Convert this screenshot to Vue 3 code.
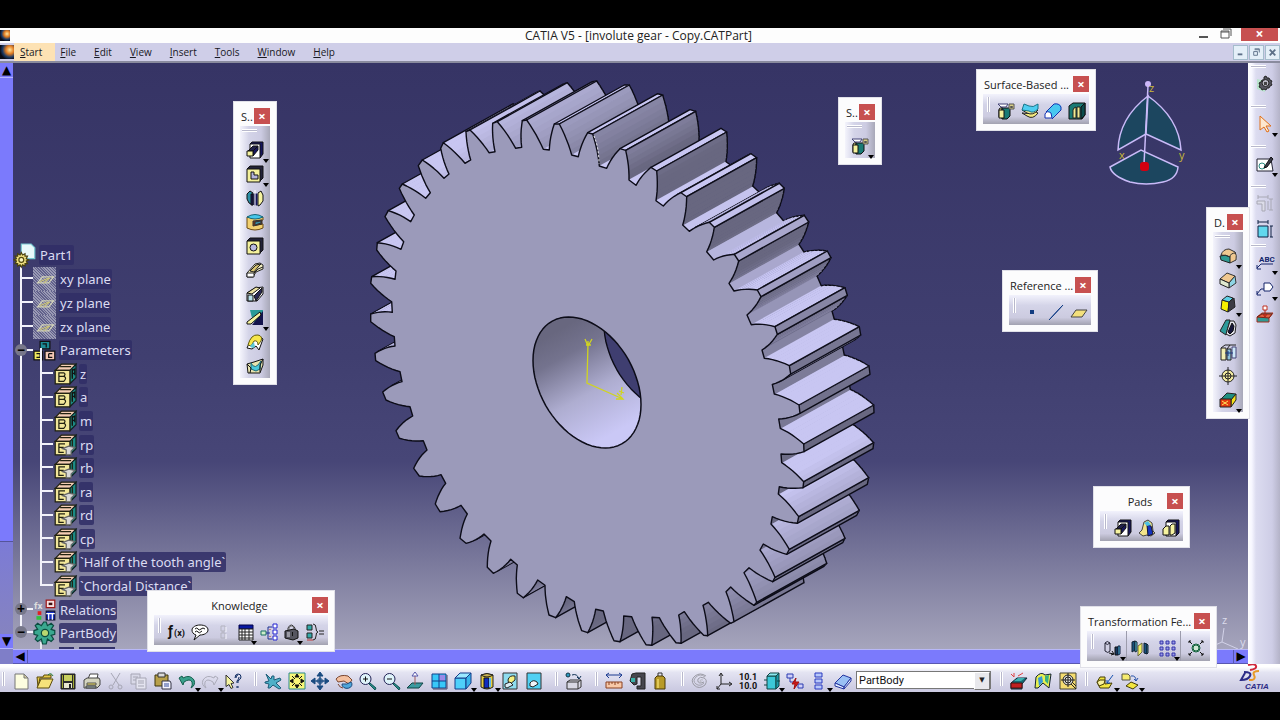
<script setup>
import { h } from 'vue'

/* ---------- icons: "fill|stroke|path" or "T|fill|x|y|size|text", on an 18 x 18 grid ---------- */
const art = {
  pad: ['#16165e|#111|M4 3l2-2h11v12l-3 4', '#fff|#111|M4 3h10v14H4z', '#20204a|#111|M2 10l5-5h5l-5 5z', '#16165e|#111|M7 10l5-5v4l-5 6z', '#f6f3a0|#111|M1 10h6v5H1z'],
  pocket: ['#222238|#111|M1 4l3-3h13v12l-3 3', '#f4f19c|#111|M1 4h13v13H1z', '#b4b4dc|#111|M5 7h3v3h4v4H5z'],
  shaft: ['#2b8fa6|#111|M1 5l3-3 3 2v12l-4-2-2-4z', '#16165e|#16165e|M8 5h3v11H8z', '#f6f3a0|#111|M12 4l3-2 2 4v6l-3 4-2 1z', 'none|#fff|M9 1v16', '#16165e|#111|M5 5h2v11H5z'],
  groove: ['#f2d070|#6b4a10|M1 4v11q8 4 16 0v-4l-7 1V8l7-1V4z', '#45c6ea|#15667a|M1 4q8-5 16 0q-8 4-16 0z', '#7a3a1c|#333|M7 8l9-1v4l-9 2z', '#3a8fa8|#333|M9 9l6-1v2l-6 2z'],
  hole: ['#222238|#111|M1 4l3-3h13v12l-3 3', '#f4f19c|#111|M1 4h13v13H1z', '#b9b9e0|#111|M4 10.500a3.500 3.500 0 1 0 7 0a3.500 3.500 0 1 0-7 0z'],
  rib: ['#f2eec0|#222|M1 12l8-9 5-1 3 2v4l-7 3-3 5H1z', '#fff|#222|M1 12h7v4H1z', '#d8c470|#222|M4 10l6-6 5-1-3 3-4 5z', 'none|#222|M8 12l4-4 5-2'],
  slot: ['#fff|#111|M1 8l8-5 8-1v7l-6 7H1z', '#e9dfa0|#111|M1 8l9-6 4 1-8 6z', '#2a2a55|#111|M8 11l8-8v4l-6 9z', '#b8e0ea|#111|M2 10h5v6H2z'],
  stiffener: ['#2a9a98|none|M4 1h13v12H7z', '#14144c|none|M17 2v14H6z', '#f6f3a0|#111|M1 13L14 3l1 3L5 15H1z'],
  loft: ['#fff|#111|M1 15l4-9 4-3h4l4 3-4 11-3-4-4 3z', '#f6e64a|#665e10|M2 12q3-11 10-10q5 1 3 6l-3 4q0-5-4-4l-3 5z', '#5bc7d6|none|M4 13l4-4 1 5-3 1z'],
  unloft: ['#e8e4b0|#111|M1 7l7-2 9-3v6l-3 8H2z', '#49c7dc|#1a6a77|M5 6q4 8 10-2l-1 8-4 2-5-2z', 'none|#111|M1 7l4 4-1 5M17 2l-3 6v7'],
  draftcyl: ['#f0ec90|#111|M2 7l3-2v11l-3-1z', '#1a7a75|#111|M5 6h8v8l-3 3H5z', '#f4f19c|#111|M2 8h5v8H2z', '#fff|#447|M1 2h10l-2 3H4z', '#d9cf88|#555|M12 2h5v5h-5z', 'none|#555|M13.500 4.500h2v1h-2z'],
  thicksurf: ['#f4ea80|#222|M1 11l5 3q6 4 11-3l-4-2q-5 4-12 2z', '#f2e690|#222|M1 8l5 3q6 3 11-3l-4-2z', '#4fcdf0|#16768a|M3 2l5 2q4 2 9-2v5q-5 5-9 2L1 8z'],
  closesurf: ['#48c8f0|none|M1 12L9 3q5-3 8 1v4l-9 8z', '#fff|#1030b0|M1 12q2-4 6-1l1 5H1z', 'none|#1030b0|M2 10L10 2q5-1 7 3v3l-9 9'],
  sew: ['#1a7a75|#111|M1 4l4-3h12v12l-3 4H1z', '#0b4c4c|#111|M13 5l4-4v12l-4 4z', '#f2eb90|#222|M6 6l2-1v11H5V8zM9 5h3v11H9z'],
  fillet: ['#f0c890|#333|M2 8q2-6 8-6l6 3q2 3 1 8l-6 3z', '#2f9a92|#222|M1 9q6-2 10 1v6l-9-3z', 'none|#333|M2 8q6 0 9 2q0-4 6-4'],
  chamfer: ['#f0c890|#333|M1 8l7-6 8 3-6 7z', '#8ed4e4|#333|M10 12l6-7 1 7-7 5z', '#dfe9d0|#222|M1 8l9 4v5l-9-4z'],
  draft: ['#f5f000|#222|M3 5l7 2-1 10-7-3z', '#5ed0e6|#222|M3 5l5-4 6 2-4 4z', '#3c3c44|#222|M10 7l5-4 1 9-7 5z'],
  shell: ['#2d9a9a|#222|M1 12L7 1h4L7 16z', '#e4e4ec|#222|M7 15l4-13h4l2 4-1 8-5 3z', '#16163c|#111|M9 13l4-9 2 3-1 5-3 3z'],
  thickness: ['#f3eeb4|#222|M2 5h5v12H2z', '#8ec0dc|#222|M8 6h4v11H8z', '#cde8f8|#447|M13 4h4v11h-4z', 'none|#222|M2 5l4-3h5L8 6M11 2h6', 'none|#1a3a80|M6 10h8M9 8v5'],
  target: ['#f4ecA0|#222|M3 9a6 6 0 1 0 12 0a6 6 0 1 0-12 0z', 'none|#222|M6 9a3 3 0 1 0 6 0a3 3 0 1 0-6 0M9 0v18M0 9h18'],
  replace: ['#1f8f80|#222|M2 8l6-6 9 1-5 6z', '#f4e11a|#222|M12 9l5-6v6l-5 7z', '#e33a10|#222|M1 8h11v8H1z', 'none|#ffe45a|M3 10l6 4M9 10l-6 4'],
  point: ['#123c80|none|M7 7h4v4H7z'],
  line: ['none|#0d3a84|M2 17L16 2', 'none|#0d3a84|M3 16L15 3'],
  plane: ['#f3e07c|#444|M1 14l5-7h11l-5 7z'],
  prism: ['#f3e48a|#444|M1 14l3-3 2-8 4-2 4 3 1 8 2 2-4 3-4-1-4 1z', '#1433c0|#113|M9 6l4 1 2 8-5 2z', '#4cc0e4|none|M6 4l4-2 3 4-4 1z'],
  multipad: ['#16165e|#111|M4 3l2-2h11v13l-3 3', '#fff|#111|M4 3h10v14H4z', '#f6f3a0|#111|M1 10l3-3h3v9H1zM8 7l2-2h3v9l-3 2H8z'],
  formula: ['T|#111|0|13|14|ƒ', 'T|#111|6|13|9|(x)'],
  comment: ['#fff|#111|M9 2c5 0 8 2 8 5s-4 5-8 5l-6 5 2-5C2 11 1 9 1 7c0-3 4-5 8-5z', 'none|#111|M4 6q2-2 3 0t3 0t4 0M4 9q2-2 3 0t4-1'],
  lockoff: ['none|#b3b3bf|M7 3h4v5H7zM7 10h4v5H7zM9 8v2', 'none|#f6f6ff|M12 4v5M12 11v5'],
  table: ['#0818a0|#000048|M2 2h14v4H2z', '#fff|#222|M2 6h14v11H2z', 'none|#222|M2 9h14M2 12h14M2 15h14M5 6v11M8 6v11M12 6v11'],
  graph: ['#cdeec8|#1b6f64|M1 8h5v4H1z', 'none|#1c2f90|M6 10h4M8 10V4h4M8 10v6h4', '#fff|#2222d0|M13 1h4v4h-4zM13 7h4v4h-4zM13 13h4v4h-4z', 'none|#c02020|M10 6v1M10 13v1'],
  lock: ['none|#333|M5 8V5q3-6 7 0v3', 'none|#777|M6 8V5q2-4 5 0v3', '#555560|#111|M2 8l9-2 4 2v7l-5 2-8-2z', '#9a9aa4|none|M4 9h3v5H4z', '#111|none|M9 9h1v4H9z'],
  equiv: ['#3aa|#222|M1 2h5v5H1zM1 10h5v5H1z', 'none|#222|M7 1q3 0 3 4t2 4q-2 0-2 4t-3 4M13 8h5M13 11h5', 'none|#b33|M1 17h6'],
  translate: ['none|#223|M2 4q2-3 5 0v8q-2 3-5 0zM2 4q2 3 5 0', '#16365e|#111|M12 8h3v8h-3z', '#4db6d8|#124|M15 7h2v8l-2 1z', 'none|#111|M6 14l5 1M9 12l2 3-3 1'],
  mirror: ['#17507c|#123|M1 3l3-1v9l-3 2z', '#5cc6dc|#123|M4 2l2 1v9l-2 1z', '#f0f060|#664|M7 7l4-3v9l-4 4z', '#17507c|#123|M13 4l3 1v10l-3-1z', '#5cc6dc|#123|M16 5l1 1v8l-1 1z'],
  pattern: ['#9a9ae8|#3434a8|M2 2h3v3H2zM8 2h3v3H8zM14 2h3v3h-3zM2 8h3v3H2zM8 8h3v3H8zM14 8h3v3h-3zM2 14h3v3H2zM8 14h3v3H8zM14 14h3v3h-3z'],
  scale: ['#cfe8d4|#12603c|M5 9a4 4 0 1 0 8 0a4 4 0 1 0-8 0z', 'none|#12603c|M6 9a3 3 0 1 0 6 0a3 3 0 1 0-6 0', 'none|#111|M2 2l3 3M16 2l-3 3M2 16l3-3M16 16l-3-3M2 4V2h2M14 2h2v2M2 14v2h2M16 14v2h-2'],
  newdoc: ['#fdfde0|#777|M3 2h9l4 4v11H3z', '#d8d0a0|#777|M12 2v4h4z'],
  open: ['#e6c94a|#5b4a0a|M1 5h6l1-2h7v3H4L2 15z', '#f7e27a|#5b4a0a|M1 16L5 7h12l-4 9z', 'none|#1f7a30|M12 3q3-3 5 1'],
  save: ['#2c2c2c|#222|M2 2h14v15H2z', '#c8d060|none|M5 3h8v6H5z', '#e9e9d0|none|M5 11h8v5H5z', '#222|none|M10 12h2v4h-2z', '#a0a830|none|M3 3h1v13H3zM14 3h1v13h-1z'],
  print: ['#fff|#444|M5 7l2-5h8l-1 5z', '#d4d4c0|#444|M1 8l3-2h12l1 2v5l-3 3H1z', '#f0e060|#555|M4 11h9v2H4z', '#9aa|#444|M3 14h10v2H3z'],
  cut: ['none|#a6a6b4|M4 1l8 12M13 1L6 13', 'none|#a6a6b4|M2 15a2 2 0 1 0 4 0a2 2 0 1 0-4 0zM11 15a2 2 0 1 0 4 0a2 2 0 1 0-4 0z'],
  copy: ['#d9d9e8|#a6a6b4|M1 2h9v10H1z', '#e4e4f0|#a6a6b4|M6 6h10v11H6z', 'none|#a6a6b4|M3 5h5M3 8h3M8 9h6M8 11h6M8 14h6'],
  paste: ['#b8a04a|#3c340e|M1 3h13v11H1z', '#d9d9d9|#333|M4 1h7v4H4z', '#f4f4ff|#334|M8 9h8l1 2v6H8z', 'none|#334a9a|M10 12h5M10 14h5'],
  undo: ['#3aa08c|#15604e|M1 6l4 7 1-3q6-4 8 0q1 3-1 6q5-3 3-8q-4-6-11-2L4 4z'],
  redo: ['none|#acacba|M17 6l-4 7-1-3q-6-4-8 0q-1 3 1 6q-5-3-3-8q4-6 11-2l1-2z'],
  help: ['#f5f4a0|#333|M1 3l8 8-3 .5 2 4-2 1-2-4-3 2z', 'none|#0d2a60|M10 6q0-4 3-4t3 3q0 2-3 4v2M13 14v2', 'none|#0d2a60|M11 6q0-3 2-3M14 5q0 2-2 4v2M12 14v2'],
  fly: ['#4fb0c8|#1d5c78|M2 2l5 5 1-3 2 0 0 4 6-2 1 2-5 3 5 5-2 1-6-4-3 3-2 0 1-4-4-1 0-1 4-1z'],
  fit: ['#f8f678|#2b8a8a|M1 1h16v16H1z', '#111|#111|M9 2l2 3H7zM9 16l2-3H7zM2 9l3-2v4zM16 9l-3-2v4z', 'none|#111|M4 4l3 3M14 4l-3 3M4 14l3-3M14 14l-3-3'],
  pan: ['#194a80|#194a80|M9 0l3 4H6zM9 18l3-4H6zM0 9l4-3v6zM18 9l-4-3v6z', 'none|#194a80|M9 3v12M3 9h12M8 6h2v6H8zM6 8h6v2H6z'],
  rotate: ['#f4c0a0|#7a4630|M1 7q4-5 12-3l4 4-3 4-5-3-6 1z', '#4ea6da|#1c4a7c|M7 12a5 4 0 1 0 9-2q-4 3-9 2z', 'none|#7a4630|M3 12q2 4 5 4'],
  zoomin: ['#dff4fa|#225|M1 7a5.500 5.500 0 1 0 11 0a5.500 5.500 0 1 0-11 0z', 'none|#111|M4 7h5M6.500 4.500v5', '#2a8a8a|#155|M11 11l6 5-1 2-6-6z'],
  zoomout: ['#dff4fa|#225|M1 7a5.500 5.500 0 1 0 11 0a5.500 5.500 0 1 0-11 0z', 'none|#111|M4 7h5', '#2a8a8a|#155|M11 11l6 5-1 2-6-6z'],
  normal: ['#3a9aa0|#144|M1 16l5-5h11l-4 5z', 'none|#a05a5a|M9 13V4', '#fff|#55a|M9 0l3 4H6z'],
  quad: ['#38c8f8|#10408a|M2 2h14v14H2z', '#9a8ae8|none|M9 3h6v6H9z', 'none|#10408a|M9 2v14M2 9h14', 'none|#446|M17 3v14H3'],
  cube: ['#4fd0fa|#143c8a|M1 6h11v11H1z', '#9ae8ff|#143c8a|M1 6l5-5h11l-5 5z', '#38b4ea|#143c8a|M12 6l5-5v10l-5 6z'],
  cylinder: ['#e6cc40|#222|M3 3q6-3 12 0v12q-6 4-12 0z', '#102cc0|#111|M6 6h5v10H6z', '#60b8f0|none|M11 6h2v9h-2z', '#c8b050|#222|M3 3q6-3 12 0q-6 4-12 0z'],
  hide: ['#8edcf0|#333|M2 1h14v16H2z', '#f4f080|#222|M7 8q1-5 7-4v4l-6 5z', '#d8ecf4|#222|M4 12l5-2 3 3-6 3-2-1z'],
  swap: ['#50d0f4|#333|M2 1h14v16H2z', '#f0f4fa|#222|M5 11q3-4 7-1l1 2-5 3-3-1z'],
  convert: ['#2a9ac0|#134|M1 3a2 2 0 1 0 4 0a2 2 0 1 0-4 0z', 'none|#135|M7 3q5-2 7 4M12 5l2 2 2-3', '#d8d8e4|#333|M2 10l3-2h11v7l-3 2H2zM2 10h11v7M13 10l3-2'],
  ruler: ['none|#1a3a90|M1 3h16M4 1L1 3l3 3M14 1l3 2-3 3', '#f8c8a8|#8a4020|M1 10h16v6H1z', 'none|#8a4020|M4 10v3M7 10v2M10 10v3M13 10v2'],
  caliper: ['#46464e|#222|M4 2l4-1h9v16H9v-3h4V5H9v7l-3 1-4-4z', '#3ab0a8|none|M3 6h4v4H3z'],
  weight: ['none|#333|M7 5V1h4v4', '#b89a28|#4a3a08|M4 6l2-2h6l2 2v11H4z', '#e0c858|none|M6 7h2v9H6z'],
  update: ['none|#9a9aa4|M15 4q-6-4-11 0t-1 9q5 5 11 0q3-5-1-7t-6 1q-1 4 3 4l3-1', 'none|#a4a4ae|M14 5q-5-4-9 0t0 7q4 3 8-1', 'none|#b8b8c2|M12 8q-3-1-3 1t2 1'],
  axes: ['none|#222|M6 2v10h10M6 12l-4 5M4 4l2-3 2 3M14 10l3 2-3 2M2 14v3h3'],
  numbers: ['T|#111|0|8|9|10.1', 'T|#111|0|17|9|10.0'],
  block: ['#3cc8d8|#144|M4 4h9v13H4z', '#8ae8f0|#144|M4 4l3-3h9l-3 3z', '#1b98a8|#144|M13 4l3-3v13l-3 3z', 'none|#144|M1 8h3M1 13h3M14 9h3'],
  knowpath: ['#d0d0f8|#2a3ab0|M1 2h6v4H1zM12 12h5v4h-5z', 'none|#2a3ab0|M4 6v4h4', '#d01818|#a01010|M10 6l-4 6h3l-1 5 5-7H9z'],
  stack: ['#b8c8fa|#2a3ac0|M5 1h7v4H5zM5 7h7v4H5zM5 13h7v4H5z'],
  slab: ['#9ac0f4|#2434a0|M1 11l8-8 8 3-7 9z', '#e4f0ff|#2434a0|M1 11l9 4v2l-9-3zM10 15l7-9v3l-7 8z'],
  redpart: ['#146c74|#123|M1 11l6-5h10l-5 6v5H1z', '#c02020|#411|M1 11h11v5H1z', '#3cb0b0|none|M4 9l4-3h7l-4 3z', 'none|#e04040|M1 2l3 3M4 1v4M8 4l5-3'],
  yellowsurf: ['#e8f050|#123|M2 5q5-6 9-2l6-1-2 14-6-5-5 5H1z', '#3898d8|none|M4 6l4-2 1 6-4 4z', '#38b080|none|M11 4l4-1-1 9-3-3z'],
  inspect: ['#f4dc70|#443|M1 1h16v16H1z', '#e4e4dc|#222|M4 8a5 5 0 1 0 10 0a5 5 0 1 0-10 0z', 'none|#222|M9 1v14M2 8h14M6 8a3 3 0 1 0 6 0a3 3 0 1 0-6 0M12 12l5 5M13 10l4 4'],
  bookopen: ['#f3e640|#443c08|M1 10l3-5h5v7l7-1-3 5H4z', '#faf29a|#443c08|M1 10l3-2h5l-1 4-5 2z', 'none|#1450b0|M17 3l-6 8M11 8v3h3'],
  bookmove: ['#f6ec70|#554|M1 2h6l2 2v4H1z', '#f3e640|#443c08|M5 14l5-4 7 3-5 4z', 'none|#2450a8|M10 4q5-1 5 5M13 7l2 2 2-3'],
  gearset: ['#b8e4cc|none|M1 4l8 2v11l-8-3z', '#55555f|#222|M8 2l2-1 1 2 2 0 1 2 2 1-1 2 1 2-2 1-1 2-2 0-1 2-2-1-2 1-1-2-2-1 1-2-1-2 2-1 1-2 2 0z', '#b8b8c4|#222|M6 8a3.500 3.500 0 1 0 7 0a3.500 3.500 0 1 0-7 0z', '#444|none|M8 7h3v3H8z'],
  arrow: ['#fde8d0|#e07018|M4 1l11 10h-5l3 5-2 1-3-5-4 3z'],
  sketch: ['#fff|#223|M1 4h14l2 12H1z', 'none|#2a8a80|M3 11a3 3 0 1 0 6 0a3 3 0 1 0-6 0z', '#3a3a48|#111|M9 11l6-9 2 2-6 8-3 1z'],
  constroff: ['#dcdce8|#a8a8b4|M1 7h8v10H6v-7H1z', 'none|#a8a8b4|M2 3h10M2 1v4M12 1v4M15 5v11M13 5h4M13 16h4M12 7v9'],
  constr: ['#62d8ee|#124|M2 6h10v11H2z', 'none|#124|M2 2h10M2 0v4M12 0v4M15 6v11M14 6h3M14 17h3'],
  abc: ['T|#15256a|3|9|8|ABC', 'none|#15256a|M5 11h12M5 11l-4 4M1 12v4h4'],
  flag: ['#fff|#15256a|M8 4h6l3 4-3 4H8z', 'none|#15256a|M8 10H5l-4 5M1 12v4h4'],
  assembly: ['#2f9a94|#a03020|M1 12l5-4h11l-4 5v4H1z', '#e06040|#802010|M1 12l5-3h10l-3 4z', '#fff|#c03020|M7 1h4v4H7z', 'none|#b02010|M9 5v6M7 9l2 3 2-3'],
  hatch: ['none|#d4d4b8|M3 13l4-5h9l-4 5z', 'none|#c9c27a|M5 12l7-3M8 13l5-4'],
  partroot: ['#e8f8fa|#78c8d0|M6 0h8l3 3v9H6z', '#f0e080|#4a4210|M1 10l2 0 0-2 2 1 1-2 1 2 2-1 0 2 2 0-1 2 2 1-2 1 1 2-2 0 0 2-2-1-1 2-1-2-2 1 0-2-2 0 1-2-2-1 2-1z', '#f8f4c0|#554c10|M4 13a2 2 0 1 0 4 0a2 2 0 1 0-4 0z'],
  params: ['#1b8a94|#111|M5 2h8v6H5z', '#f0e860|#111|M0 10h7v7H0z', '#f4c8b4|#111|M9 10h8v7H9z', 'none|#111|M7 4h3v3M2 12h3v3H2M12 12h3M12 12v3h3'],
  relations: ['T|#ddd|0|8|8|fx', '#f8e0e0|#a01818|M10 1h7v6h-7z', '#401010|none|M12 3h3v2h-3z', '#1830c0|#113|M10 10h7v7h-7z', 'none|#fff|M10 12h7M12 12v5M15 12v5', '#e02020|none|M3 10h3v3H3z', '#30c040|none|M2 14h4v3H2z'],
  body: ['#3aa890|#0c4c40|M8 0l2 0 1 3 3-2 2 2-2 3 3 1v3l-3 1 2 3-2 2-3-2-1 4H7l-1-4-3 2-2-2 2-3-3-1V7l3-1-2-3 2-2 3 2z', '#b8d870|#0c4c40|M6 9a3 3 0 1 0 6 0a3 3 0 1 0-6 0z'],
  boxB: ['#f4cdb4|#221|M1 6l5-5h12l-4 5z', '#1c8a84|#122|M13 6l5-5v11l-5 5z', '#f2e79a|#221|M1 6h12v11H1z', 'none|#221|M4 8h4q2 1 0 3q3 1 0 4H4zM4 11h5M15 5v8M5 3h9', 'none|#111|M15 12V6l2-1v5M15 9l2-1'],
  boxE: ['#f4cdb4|#221|M1 6l5-5h12l-4 5z', '#1c8a84|#122|M13 6l5-5v11l-5 5z', '#f2e79a|#221|M1 6h12v11H1z', 'none|#221|M9 8H4v7h4M4 11h4M15 5v8M5 3h9', '#d8d8d8|#666|M7 12l5-2 5 1-3 3v3h-4v-4z'],
}

function Icon({ name }) {
  return h('svg', { class: 'icon', viewBox: '0 0 18 18', 'aria-hidden': 'true' }, (art[name] || []).map((row) => {
    const p = row.split('|')
    if (p[0] === 'T') {
      return h('text', { x: p[2], y: p[3], 'font-size': p[4], fill: p[1], 'font-family': 'Roboto, sans-serif', 'font-weight': 'bold' }, p[5])
    }
    return h('path', { d: p[2], fill: p[0], stroke: p[1] })
  }))
}
Icon.props = ['name']

/* ---------- chrome ---------- */
const menus = ['Start', 'File', 'Edit', 'View', 'Insert', 'Tools', 'Window', 'Help']

const palettes = [
  { id: 'sketch', title: 'S..', vertical: true, groups: [['pad*', 'pocket*', 'shaft', 'groove', 'hole', 'rib', 'slot', 'stiffener*', 'loft', 'unloft']] },
  { id: 'single', title: 'S..', vertical: true, groups: [['draftcyl*']] },
  { id: 'surface', title: 'Surface-Based ...', groups: [['draftcyl', 'thicksurf', 'closesurf', 'sew']] },
  { id: 'reference', title: 'Reference ...', groups: [['point', 'line', 'plane']] },
  { id: 'dressup', title: 'D.', vertical: true, groups: [['fillet*', 'chamfer', 'draft*', 'shell', 'thickness', 'target', 'replace*']] },
  { id: 'pads', title: 'Pads', centered: true, groups: [['pad', 'prism', 'multipad']] },
  { id: 'transform', title: 'Transformation Fe...', groups: [['translate*'], ['mirror', 'pattern*'], ['scale']] },
  { id: 'knowledge', title: 'Knowledge', centered: true, groups: [['formula', 'comment', 'lockoff', 'table*', 'graph', 'lock*', 'equiv']] },
]

const bottomBefore = [
  { id: 'file', icons: ['newdoc', 'open', 'save', 'print', 'cut', 'copy', 'paste', 'undo*', 'redo*', 'help'] },
  { id: 'view', icons: ['fly', 'fit', 'pan', 'rotate', 'zoomin', 'zoomout', 'normal', 'quad', 'cube*', 'cylinder*', 'hide', 'swap'] },
  { id: 'convert', icons: ['convert'] },
  { id: 'measure', icons: ['ruler', 'caliper', 'weight'] },
  { id: 'tools', icons: ['update', 'axes', 'numbers', 'block*', 'knowpath', 'stack*', 'slab'] },
]
const bottomAfter = [
  { id: 'analysis', icons: ['redpart', 'yellowsurf', 'inspect'] },
  { id: 'catalog', icons: ['bookopen*', 'bookmove*'] },
]
const sideGroups = [['gearset'], ['arrow*'], ['sketch*'], ['constroff', 'constr'], ['abc*', 'flag*', 'assembly']]
const bare = (n) => n.replace('*', '')
const drops = (n) => n.endsWith('*')

const tree = [
  { text: 'Part1', icon: 'partroot', level: 0 },
  { text: 'xy plane', icon: 'hatch', level: 1 },
  { text: 'yz plane', icon: 'hatch', level: 1 },
  { text: 'zx plane', icon: 'hatch', level: 1 },
  { text: 'Parameters', icon: 'params', level: 1, knob: '−' },
  ...['z', 'a', 'm'].map((text) => ({ text, icon: 'boxB', level: 2 })),
  ...['rp', 'rb', 'ra', 'rd', 'cp', '`Half of the tooth angle`', '`Chordal Distance`'].map((text) => ({ text, icon: 'boxE', level: 2 })),
  { text: 'Relations', icon: 'relations', level: 1, knob: '+' },
  { text: 'PartBody', icon: 'body', level: 1, knob: '−' },
]

/* ---------- gear ---------- */
// Each row is one tooth, clockwise: two tip corners, then the two corners of the gap after it.
const section = (ox, oy, rows) => rows.map((r) => r.map((v, i) => (i % 2 ? oy : ox) + v / 3))
const teeth = [
  ...section(360, 70, [
    [47, 872, 45, 850, 105, 828, 103, 800], [32, 755, 32, 732, 97, 727, 95, 695], [32, 640, 35, 620, 105, 628, 108, 603],
    [50, 540, 52, 518, 123, 538, 131, 515], [75, 440, 85, 422, 152, 455, 163, 435], [118, 355, 127, 342, 197, 385, 211, 368],
    [175, 287, 187, 270, 252, 325, 267, 312], [242, 235, 250, 218, 315, 280, 332, 270], [318, 185, 330, 180, 387, 248, 405, 245],
    [398, 160, 412, 155, 467, 235, 485, 232], [487, 152, 500, 150, 550, 238, 568, 240], [583, 162, 598, 162, 635, 255, 655, 260],
    [683, 188, 698, 192, 718, 288, 740, 295],
  ]),
  ...section(600, 70, [
    [60, 236, 77, 241, 87, 330, 108, 346], [153, 292, 170, 303, 168, 392, 190, 408], [243, 368, 260, 380, 248, 465, 268, 484],
    [328, 457, 343, 472, 320, 545, 341, 570], [403, 553, 416, 573, 387, 640, 402, 663], [472, 660, 483, 680, 441, 735, 454, 764],
    [525, 770, 532, 793, 486, 840, 493, 865],
  ]),
  ...section(600, 350, [
    [568, 47, 572, 72, 517, 103, 523, 132], [597, 165, 600, 190, 536, 207, 541, 235], [611, 282, 612, 305, 543, 312, 545, 338],
    [611, 395, 609, 413, 538, 410, 535, 432], [596, 500, 592, 520, 517, 500, 513, 522], [568, 598, 560, 613, 490, 582, 480, 600],
    [525, 682, 518, 695, 447, 653, 432, 668], [470, 757, 462, 766, 392, 711, 378, 725], [402, 815, 392, 820, 325, 757, 309, 766],
    [323, 857, 311, 856, 253, 785, 236, 795], [243, 880, 228, 878, 178, 803, 156, 802], [155, 886, 138, 884, 95, 800, 71, 798],
    [60, 875, 42, 872, 10, 783, -13, 778],
  ]),
  ...section(360, 350, [
    [683, 848, 665, 842, 643, 755, 619, 740], [587, 803, 567, 795, 555, 706, 533, 690], [490, 743, 472, 730, 472, 645, 452, 628],
    [400, 670, 382, 652, 393, 573, 372, 552], [318, 580, 300, 565, 322, 492, 303, 466], [240, 485, 226, 462, 257, 400, 243, 374],
    [178, 378, 161, 355, 201, 300, 190, 272], [118, 265, 108, 242, 158, 198, 150, 170], [78, 150, 68, 126, 126, 95, 120, 65],
  ]),
]

const STEPS = 6
function flank(from, to, core) {
  const cx = (from[0] + to[0]) / 2, cy = (from[1] + to[1]) / 2
  const k = [cx + (cx - core[0]) * 0.3, cy + (cy - core[1]) * 0.3]
  return Array.from({ length: STEPS - 1 }, (_, i) => {
    const t = (i + 1) / STEPS, u = 1 - t
    return [0, 1].map((a) => u * u * from[a] + 2 * u * t * k[a] + t * t * to[a])
  })
}
const outline = []
teeth.forEach((t, i) => {
  const next = teeth[(i + 1) % teeth.length]
  const prev = teeth[(i + teeth.length - 1) % teeth.length]
  const mean = (tooth, before) => [0, 1].map((a) => (tooth[a] + tooth[2 + a] + tooth[4 + a] + before[6 + a]) / 4)
  const tipA = [t[0], t[1]], tipB = [t[2], t[3]], rootA = [t[4], t[5]], rootB = [t[6], t[7]]
  outline.push({ p: tipA, edge: true }, { p: tipB, edge: true })
  flank(tipB, rootA, mean(t, prev)).forEach((p) => outline.push({ p }))
  outline.push({ p: rootA }, { p: rootB })
  flank(rootB, [next[0], next[1]], mean(next, t)).forEach((p) => outline.push({ p }))
})

const depth = [70, -39]
const back = (p) => [p[0] + depth[0], p[1] + depth[1]]
const fmt = (list) => list.map((p) => p.map((v) => v.toFixed(1)).join(',')).join(' ')
function shade(dx, dy) {
  const a = (Math.atan2(dy, dx) * 180) / Math.PI
  let k = 1
  if (a > 42) k = Math.max(0, 1 - (a - 42) / 46)
  if (a > 112) k = a < 140 ? (a - 112) / 90 : 0.1
  const mix = (lo, hi) => Math.round(lo + (hi - lo) * k)
  return `rgb(${mix(104, 200)},${mix(103, 198)},${mix(128, 242)})`
}
const n = outline.length
const faces = outline.map((v, i) => {
  const w = outline[(i + 1) % n]
  const dx = w.p[0] - v.p[0], dy = w.p[1] - v.p[1]
  return { v, w, seen: dy * depth[0] - dx * depth[1] > 0, dx, dy }
})
const quads = faces.map((f, i) => {
  const before = faces[(i + n - 1) % n], after = faces[(i + 1) % n]
  const lines = [`M${fmt([back(f.v.p)])}L${fmt([back(f.w.p)])}`]
  if (f.v.edge || !before.seen) lines.push(`M${fmt([f.v.p])}L${fmt([back(f.v.p)])}`)
  if (f.w.edge || !after.seen) lines.push(`M${fmt([f.w.p])}L${fmt([back(f.w.p)])}`)
  // Strips overlap slightly along the contour so that no seam shows between them.
  const len = Math.hypot(f.dx, f.dy) || 1
  const ex = (f.dx / len) * 0.4, ey = (f.dy / len) * 0.4
  const v = before.seen ? [f.v.p[0] - ex, f.v.p[1] - ey] : f.v.p
  const w = after.seen ? [f.w.p[0] + ex, f.w.p[1] + ey] : f.w.p
  return {
    key: i,
    seen: f.seen,
    order: (f.v.p[0] + f.w.p[0]) * depth[0] + (f.v.p[1] + f.w.p[1]) * depth[1],
    points: fmt([v, w, back(w), back(v)]),
    fill: shade(f.dx, f.dy),
    lines: lines.join(''),
  }
}).filter((q) => q.seen).sort((a, b) => a.order - b.order)
const frontFace = fmt(outline.map((o) => o.p))

const ring = (ox, oy) => fmt(Array.from({ length: 72 }, (_, i) => {
  const t = (i * Math.PI) / 36
  return [587 + ox + 54 * Math.cos(t), 382.5 + oy + 22 * Math.cos(t) + 61.7 * Math.sin(t)]
}))
const bore = ring(0, 0)
const boreBack = ring(71, -36)
</script>

<template>
  <div class="app">
    <header class="titlebar">
      <span class="mark"></span>
      <h1>CATIA V5 - [involute gear - Copy.CATPart]</h1>
      <div class="window-controls">
        <button class="wc" aria-label="Minimize"><svg viewBox="0 0 12 12"><path d="M1 9h9" stroke="#555" stroke-width="2" /></svg></button>
        <button class="wc" aria-label="Restore"><svg viewBox="0 0 12 12"><path d="M3 1h8v7M1 3h8v7H1zM1 4h8" fill="none" stroke="#555" /></svg></button>
        <button class="wc close" aria-label="Close">×</button>
      </div>
    </header>
    <nav class="menubar">
      <span class="mark"></span>
      <button v-for="m in menus" :key="m" :class="{ active: m === 'Start' }"><u>{{ m[0] }}</u>{{ m.slice(1) }}</button>
      <div class="child-controls">
        <button aria-label="Minimize document"><svg viewBox="0 0 14 14"><path d="M4 9h5" stroke="#5d7088" stroke-width="2" /></svg></button>
        <button aria-label="Restore document"><svg viewBox="0 0 14 14"><path d="M5 3h5v4M4 6h4v4H4zM5 4h5" fill="none" stroke="#5d7088" /></svg></button>
        <button aria-label="Close document"><svg viewBox="0 0 14 14"><path d="M4 4l6 6M10 4l-6 6" stroke="#5d7088" stroke-width="2" /></svg></button>
      </div>
    </nav>

    <main class="workspace">
      <div class="vscroll">
        <button aria-label="Scroll up">▲</button>
        <span class="thumb"></span>
        <span class="track"></span>
        <button aria-label="Scroll down">▼</button>
      </div>
      <div class="center">
        <section class="canvas">
          <svg class="scene" viewBox="13 63 1235 586" preserveAspectRatio="xMinYMin meet" role="img" aria-label="Involute gear">
            <defs>
              <linearGradient id="boreShade" gradientUnits="userSpaceOnUse" x1="555" y1="332" x2="612" y2="434">
                <stop offset="0" stop-color="#68677f" />
                <stop offset=".22" stop-color="#74738e" />
                <stop offset=".6" stop-color="#aeadd0" />
                <stop offset="1" stop-color="#cac8f6" />
              </linearGradient>
              <clipPath id="boreClip"><polygon :points="bore" /></clipPath>
            </defs>
            <g stroke-linejoin="round" stroke-linecap="round">
              <template v-for="q in quads" :key="q.key">
                <polygon :points="q.points" :fill="q.fill" />
                <path :d="q.lines" fill="none" stroke="#0c0c18" stroke-width="1.400" />
              </template>
              <polygon :points="frontFace" fill="#9b9aba" stroke="#0c0c18" stroke-width="1.400" />
              <polygon :points="bore" fill="url(#boreShade)" />
              <polygon :points="boreBack" fill="#3f3e70" stroke="#0c0c18" stroke-width="1.400" clip-path="url(#boreClip)" />
              <polygon :points="bore" fill="none" stroke="#0c0c18" stroke-width="1.500" />
            </g>
            <path d="M594 136Q599 148 599 164" fill="none" stroke="#fff" stroke-dasharray="2 2" />
            <g fill="none" stroke="#d0d420" stroke-width="1.300">
              <path d="M588 341v2L587 383L623 399M585 339l3 7 4-7M586 345h5M617 393l6 6h-7M619 391l5 2M622 387l-1 8" />
            </g>
            <g stroke="#c9baf8" stroke-width="1.500" fill="#1c465f">
              <path d="M1118 150Q1119 118 1148 96L1146 134z" />
              <path d="M1181 150Q1179 118 1148 96L1146 134z" />
              <path d="M1110 167L1141 150L1178 167Q1177 179 1163 182Q1146 186 1130 182Q1112 176 1110 167z" />
              <path d="M1148 86L1144 164" fill="none" />
            </g>
            <circle cx="1148" cy="84" r="3" fill="#cdb8fa" />
            <rect x="1140" y="162" width="9" height="9" rx="3" fill="#d40010" />
            <g class="axis-names"><text x="1149" y="92">z</text><text x="1119" y="159">x</text><text x="1179" y="159">y</text></g>
            <g stroke="#d2d2e8" fill="none"><path d="M1224 628L1222 642L1204 650M1222 642L1238 649" /></g>
            <g class="triad"><text x="1222" y="624">z</text><text x="1240" y="646">y</text></g>
            <path d="M41 642v7" stroke="#fff" stroke-width="1.500" />
            <path d="M59 648h15M79 648h36" stroke="#33316a" stroke-width="2" />
          </svg>
          <ul class="tree">
            <li v-for="row in tree" :key="row.text" :class="['level' + row.level, row.icon]">
              <button v-if="row.knob" class="knob" :aria-label="'Toggle ' + row.text">{{ row.knob }}</button>
              <span class="node"><Icon :name="row.icon" /></span>
              <span class="label">{{ row.text }}</span>
            </li>
          </ul>
        </section>
        <div class="hscroll">
          <button aria-label="Scroll left">◀</button>
          <span class="thumb"></span>
          <button aria-label="Scroll right">▶</button>
        </div>
      </div>
      <aside class="sidebar">
        <div v-for="(g, i) in sideGroups" :key="i" class="side-group">
          <span class="grip"></span>
          <button v-for="name in g" :key="name" class="tool" :class="{ drop: drops(name) }" :aria-label="bare(name)"><Icon :name="bare(name)" /></button>
        </div>
      </aside>
    </main>

    <footer class="toolbar">
      <div v-for="g in bottomBefore" :key="g.id" class="bar-group" :class="g.id">
        <span class="grip"></span>
        <button v-for="name in g.icons" :key="name" class="tool" :class="{ drop: drops(name) }" :aria-label="bare(name)"><Icon :name="bare(name)" /></button>
      </div>
      <label class="picker">
        <select aria-label="Work object"><option>PartBody</option></select>
      </label>
      <div v-for="g in bottomAfter" :key="g.id" class="bar-group" :class="g.id">
        <span class="grip"></span>
        <button v-for="name in g.icons" :key="name" class="tool" :class="{ drop: drops(name) }" :aria-label="bare(name)"><Icon :name="bare(name)" /></button>
      </div>
      <svg class="logo" viewBox="0 0 36 28" aria-label="CATIA">
        <path d="M9 1q7-2 8 1t-6 4" fill="none" stroke="#d0283c" stroke-width="2" />
        <path d="M5 8q8 0 6 4t-9 4l4-7" fill="none" stroke="#2c2c86" stroke-width="2" />
        <path d="M20 7q-7 0-5 4t-2 5h-3" fill="none" stroke="#e89a28" stroke-width="2" />
        <text x="6" y="25">CATIA</text>
      </svg>
    </footer>

    <section v-for="p in palettes" :key="p.id" class="palette" :class="[p.id, { vertical: p.vertical, centered: p.centered }]">
      <header><h2>{{ p.title }}</h2><button class="x" :aria-label="'Close ' + p.title">×</button></header>
      <div class="tray">
        <div v-for="(g, i) in p.groups" :key="i" class="tray-group">
          <span v-if="i === 0" class="grip"></span>
          <button v-for="name in g" :key="name" class="tool" :class="{ drop: drops(name) }" :aria-label="bare(name)"><Icon :name="bare(name)" /></button>
        </div>
      </div>
    </section>
  </div>
</template>

<style>
html, body { background: #000; }
</style>

<style scoped>
* { box-sizing: border-box; }
.app {
  position: relative; display: flex; flex-direction: column; min-height: 100vh;
  border: solid #000; border-width: 28px 0; overflow: hidden;
  font-family: "Open Sans", "Noto Sans", sans-serif; color: #222; background: #000;
}
button { margin: 0; padding: 0; border: 0; background: none; font: inherit; color: inherit; }
h1, h2 { margin: 0; font-weight: 400; }

.titlebar { position: relative; display: flex; align-items: center; height: 15px; background: #fdfdfd; }
.titlebar h1 { flex: 1; margin-left: 74px; text-align: center; font-size: 12px; line-height: 15px; }
.mark { width: 10px; height: 11px; background: radial-gradient(circle at 70% 35%, #ffe6a0, #e07a20 30%, #1b3a66 55%, #0a0a14 75%); }
.window-controls { display: flex; align-self: flex-start; margin-right: 2px; }
.wc { display: flex; justify-content: center; width: 22px; height: 13px; }
.wc svg { width: 12px; height: 12px; }
.wc.close { width: 37px; margin-left: 4px; background: #c75050; color: #fff; font: bold 14px/11px "Open Sans", sans-serif; }

.menubar { display: flex; height: 20px; background: #cfcee8; border-bottom: 2px solid #8a8b9e; font: 10px/18px "Open Sans", "Noto Sans", sans-serif; }
.menubar .mark { width: 14px; height: 14px; margin-top: 2px; }
.menubar > button { padding: 0 9px; color: #18181f; }
.menubar > button.active { padding: 0 13px 0 6px; margin-right: -4px; background: #fde2b4; }
.child-controls { display: flex; gap: 1px; margin: 2px 0 0 auto; }
.child-controls button { width: 15px; height: 15px; background: #e4eff8; border: 1px solid #a4bccc; }
.child-controls svg { display: block; width: 13px; height: 13px; }

.workspace { flex: 1; display: flex; min-height: 0; }
.center { flex: 1; display: flex; flex-direction: column; min-width: 0; }
.canvas { position: relative; flex: 1; overflow: hidden; background: linear-gradient(#363465, #403f70 50%, #474677 68%, #a6a5bc); }
.scene { position: absolute; inset: 0; width: 100%; height: 100%; }
.axis-names text { fill: #c8b838; font: 11px "Open Sans", sans-serif; }
.triad text { fill: #dcdcec; font: 11px "Open Sans", sans-serif; }

.vscroll { display: flex; flex-direction: column; width: 13px; background: #7f7ec8; }
.vscroll button, .hscroll button { color: #000; background: #7b7afc; font: 12px/14px "DejaVu Sans", sans-serif; }
.vscroll button { height: 15px; border-bottom: 1px solid #b4b4ff; margin-bottom: 15px; }
.vscroll button:first-child { margin-bottom: 0; }
.vscroll .thumb { flex: 464; background: #7b7afc; border-bottom: 1px solid #55549a; }
.vscroll .track { flex: 92; background: linear-gradient(#7c7bd6, #8583c0); }
.hscroll { display: flex; height: 15px; background: #7b7afc; border-top: 1px solid #b8b8f8; border-bottom: 1px solid #5857b0; }
.hscroll button { width: 15px; border-right: 1px solid #5857b0; line-height: 13px; }
.hscroll button:last-child { border-right: 0; border-left: 1px solid #5857b0; }
.hscroll .thumb { flex: 1; }

.tree {
  position: absolute; top: 180px; left: 0; height: 402px; margin: 0; padding: 0; list-style: none;
  display: grid; grid-template-rows: repeat(17, 1fr); font: 13px/20px "Noto Sans", sans-serif; color: #dcdcf2;
}
.tree::before { content: ""; position: absolute; left: 7px; top: 24px; bottom: 8px; width: 2px; background: #f2f2fa; }
.tree li { position: relative; display: flex; align-items: center; }
.level1 { padding-left: 20px; }
.level2 { padding-left: 40px; }
.level1::before, .level2::before { content: ""; position: absolute; left: 8px; top: 10px; width: 12px; height: 2px; background: #f2f2fa; }
.level2::before { left: 28px; }
.level2::after { content: ""; position: absolute; left: 27px; top: -14px; bottom: 12px; width: 2px; background: #f2f2fa; }
.node { display: flex; justify-content: center; width: 23px; height: 22px; margin-right: 3px; }
.node .icon { width: 22px; height: 22px; }
.hatch .node { height: 24px; background: repeating-linear-gradient(45deg, #9a9ab4 0 1px, #62628c 1px 2px); }
.label { padding: 0 1px; background: rgba(48, 46, 102, .85); border-radius: 2px; white-space: nowrap; }
.knob {
  position: absolute; left: 2px; top: 5px; width: 12px; height: 12px; border-radius: 50%;
  background: #77778a; color: #000; font: bold 14px/12px "Open Sans", sans-serif; z-index: 1;
}

.sidebar { width: 32px; padding-top: 1px; background: linear-gradient(90deg, #fff, #f6f6ff 12%, #dcdcf0 25%, #cecde6 75%, #b4b3c8); }
.side-group { display: flex; flex-direction: column; align-items: center; padding-left: 2px; }
.side-group .grip { width: 15px; height: 3px; margin: 1px 14px 1px 0; border: solid #fff; border-width: 1px 0; background: #b8b8cc; }
.side-group .tool { width: 24px; height: 24px; margin: 3px 0 8px; }
.side-group:nth-child(n+4) .tool { margin: 2px 0 0; }
.side-group:nth-child(4) { padding-bottom: 2px; }

.tool { position: relative; display: flex; align-items: center; justify-content: center; }
.icon { display: block; width: 18px; height: 18px; flex: none; overflow: visible; }
.drop::after { content: ""; position: absolute; right: -1px; bottom: -1px; border: 3px solid transparent; border-top: 4px solid #000; border-bottom: 0; }

.toolbar { display: flex; align-items: center; height: 28px; padding-top: 6px; overflow: hidden; background: linear-gradient(#fff 10%, #e4e4f2 30%, #cccbe2 90%); }
.bar-group { display: flex; align-items: center; height: 22px; }
.bar-group .tool { flex: 1; height: 20px; }
.bar-group .grip { width: 3px; height: 14px; margin: 0 4px 4px 2px; border: solid #fff; border-width: 0 1px; background: #b8b8cc; }
.bar-group .drop::after { right: -2px; }
.file { width: 246px; }
.view { width: 294px; margin-left: 6px; }
.convert { width: 33px; margin-left: 7px; }
.measure { width: 79px; margin-left: 7px; }
.tools { width: 176px; margin-left: 7px; }
.analysis { width: 82px; margin-left: 7px; }
.catalog { width: 60px; margin-left: 3px; }
.picker { position: relative; display: flex; width: 135px; height: 18px; margin: 0 0 2px 1px; }
.picker select { appearance: none; width: 100%; height: 18px; padding: 0 2px; border: 1px solid #777; border-radius: 0; background: #fff; color: #111; font: 11px Roboto, sans-serif; }
.picker::after {
  content: "▼"; position: absolute; right: 1px; top: 1px; width: 14px; height: 16px; pointer-events: none;
  background: #e8e8ec; border: 1px solid; border-color: #fff #777 #777 #fff; font: 7px/14px "DejaVu Sans", sans-serif; text-align: center;
}
.logo { width: 36px; height: 28px; margin: -6px 5px 0 auto; overflow: visible; }
.logo text { font: italic bold 8px "Liberation Sans", sans-serif; fill: #2c2c86; }

.palette { position: absolute; padding: 6px; background: #fcfcfd; border: 1px solid #e0e0e8; }
.palette header { display: flex; align-items: center; height: 18px; }
.palette h2 { flex: 1; padding-left: 1px; font-size: 11px; line-height: 16px; white-space: nowrap; color: #222; }
.palette.centered h2 { text-align: center; padding-left: 13px; }
.palette .x { flex: none; width: 16px; height: 16px; margin-bottom: 2px; background: #c75050; color: #fff; font: bold 13px/15px "Open Sans", sans-serif; }
.tray { display: flex; height: 30px; background: linear-gradient(#f2f2fc, #d4d4e8 35%, #cccbe0 75%, #a2a2b0); }
.tray-group { flex: 1; display: flex; align-items: center; }
.tray-group + .tray-group { border-left: 1px solid #9c9cac; }
.tray .grip { flex: none; width: 3px; height: 15px; margin: 0 4px 10px 4px; border: solid #fff; border-width: 0 1px; background: #b8b8cc; }
.tray .tool { flex: 1; height: 24px; }
.tray .icon { margin-top: 4px; }
.tray .drop::after { right: 0; bottom: -3px; }
.vertical .tray { height: auto; background: linear-gradient(90deg, #f4f4fc, #d4d4e8 30%, #cccbe2 70%, #a8a8b8); }
.vertical .tray-group { flex-direction: column; }
.vertical .tray .tool { flex: none; width: 100%; height: 24px; }
.vertical .tray .icon { margin: 0; }
.vertical .tray .grip { width: 15px; height: 3px; margin: 3px 12px 6px 0; border-width: 1px 0; }
.vertical .tray .drop::after { right: 1px; bottom: -1px; }

.sketch { left: 233px; top: 73px; width: 44px; }
.single { left: 838px; top: 69px; width: 44px; }
.surface { left: 976px; top: 41px; width: 120px; }
.reference { left: 1002px; top: 242px; width: 96px; }
.dressup { left: 1206px; top: 179px; width: 44px; }
.pads { left: 1093px; top: 458px; width: 97px; }
.transform { left: 1080px; top: 578px; width: 137px; }
.knowledge { left: 147px; top: 562px; width: 188px; }
.transform .tray-group:nth-child(1) { flex: 39; }
.transform .tray-group:nth-child(2) { flex: 54; }
.transform .tray-group:nth-child(3) { flex: 29; }
.knowledge .tray-group { padding: 0 2px 0 0; }
</style>
